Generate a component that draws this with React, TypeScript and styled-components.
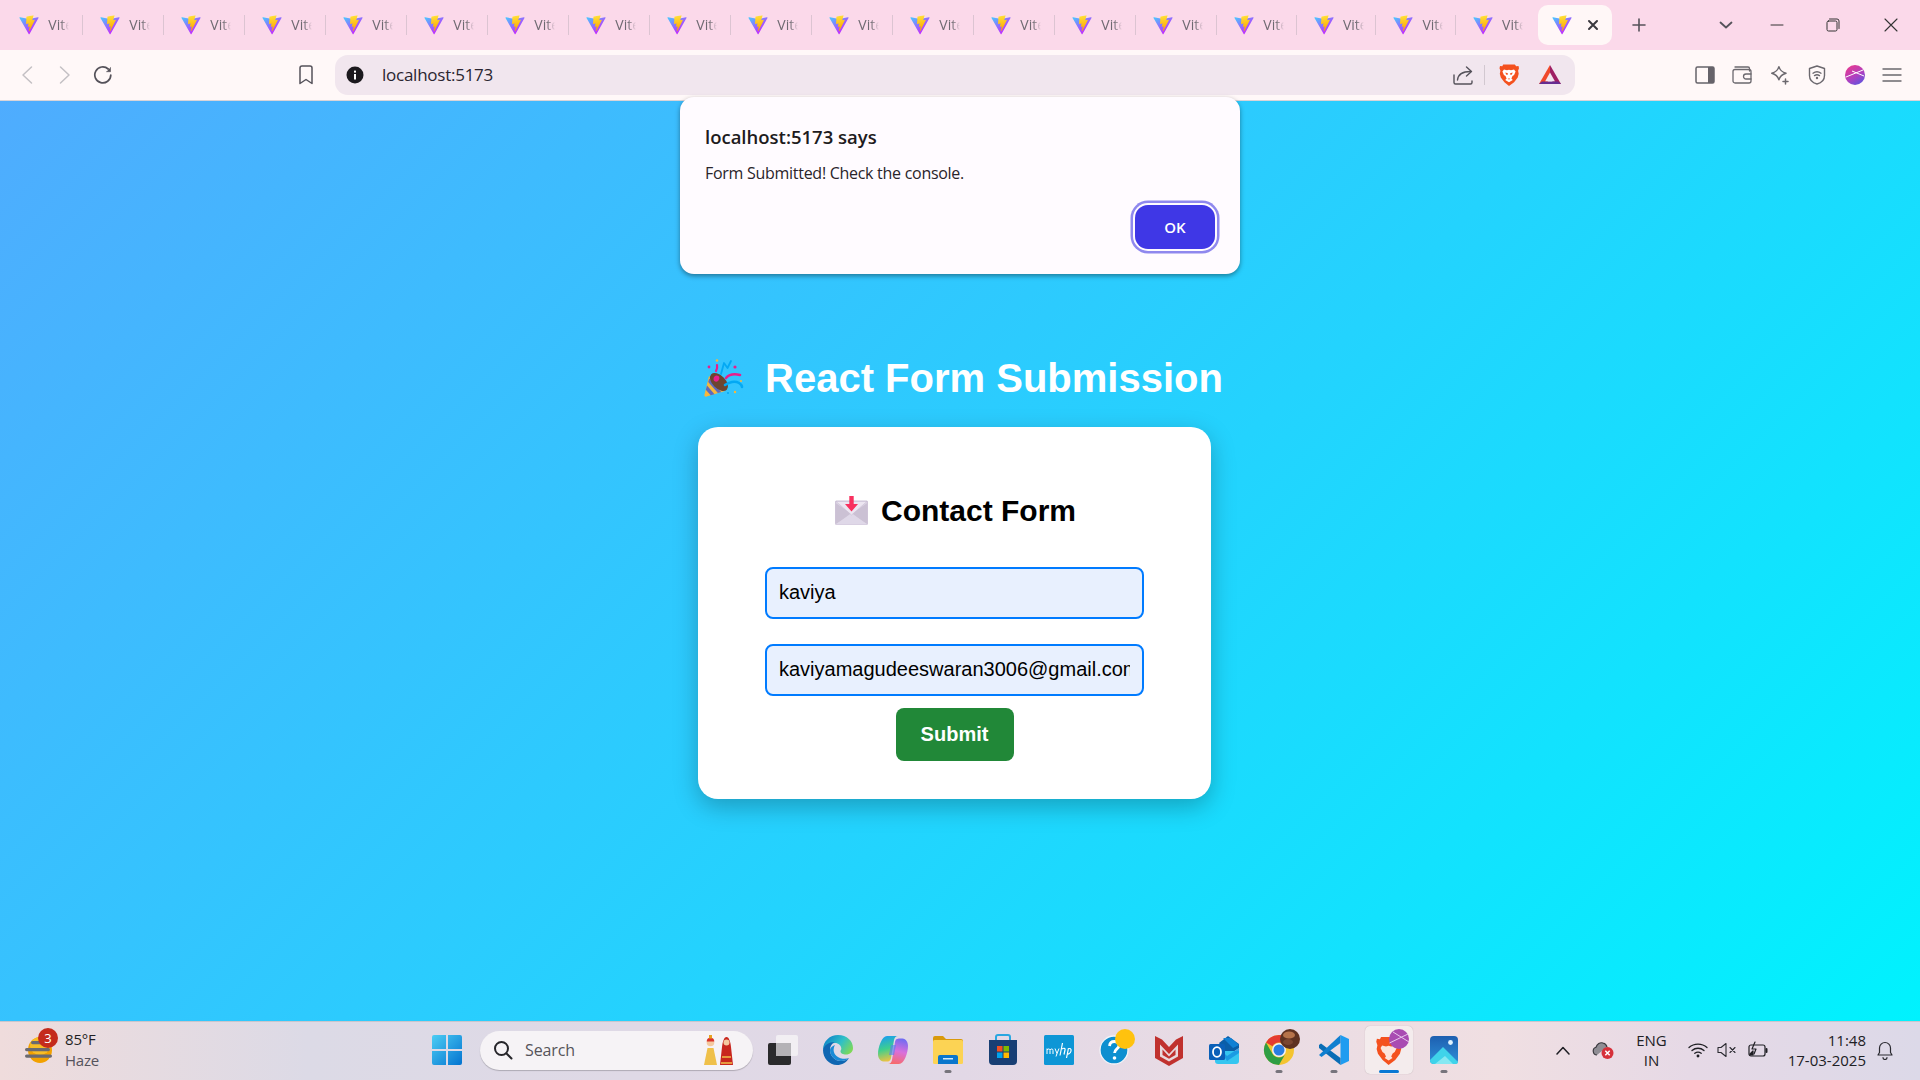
import React from 'react';
import styled, { createGlobalStyle } from 'styled-components';

const Global = createGlobalStyle`
  html, body { margin: 0; padding: 0; }
  body { font-family: "Liberation Sans", Arial, sans-serif; overflow: hidden; }
  * { box-sizing: border-box; }
`;

const UI = `"Open Sans", "Noto Sans", sans-serif`;

const Screen = styled.div`
  position: relative;
  width: 1920px;
  height: 1080px;
  display: flex;
  flex-direction: column;
  overflow: hidden;
`;

/* ---------- tab strip ---------- */
const TabStrip = styled.div`
  height: 50px;
  flex: none;
  display: flex;
  align-items: center;
  padding-left: 2.3px;
  background: #fbd9ea;
`;
const Tab = styled.div<{ $narrow?: boolean }>`
  width: ${p => (p.$narrow ? 79.6 : 81)}px;
  height: 20px;
  flex: none;
  display: flex;
  align-items: center;
  padding-left: 17px;
`;
const TabTitle = styled.span`
  width: 21px;
  margin-left: 9px;
  font: 400 14px/20px ${UI};
  color: #6f6a72;
  overflow: hidden;
  white-space: nowrap;
  mask-image: linear-gradient(to right, #000 60%, transparent 100%);
`;
const TabSep = styled.span<{ $hidden?: boolean }>`
  width: 1px;
  height: 20px;
  margin-left: auto;
  background: ${p => (p.$hidden ? 'transparent' : '#dcc4d2')};
`;
const ActiveTab = styled.div`
  width: 74px;
  height: 40px;
  margin-left: 2.4px;
  flex: none;
  border-radius: 10px;
  background: #fff7f7;
  display: flex;
  align-items: center;
  padding-left: 14px;
  gap: 15px;
`;
const PlusCell = styled.div`
  width: 30px;
  margin-left: 12px;
  display: flex;
  justify-content: center;
`;
const WindowControls = styled.div`
  margin-left: auto;
  display: flex;
  align-items: center;
`;
const ControlCell = styled.div<{ $w: number }>`
  width: ${p => p.$w}px;
  display: flex;
  justify-content: center;
`;
const CloseCell = styled(ControlCell)`
  margin-left: 4px;
`;

/* ---------- toolbar ---------- */
const Toolbar = styled.div`
  height: 51px;
  flex: none;
  display: flex;
  align-items: flex-start;
  padding: 5px 0 0 8px;
  background: #fff8f8;
  border-bottom: 1px solid #d9d4d8;
`;
const ToolCell = styled.div<{ $w?: number }>`
  width: ${p => p.$w ?? 38}px;
  height: 40px;
  flex: none;
  display: flex;
  align-items: center;
  justify-content: center;
`;
const BookmarkCell = styled(ToolCell)`
  margin-left: 165px;
`;
const AddressBar = styled.div`
  width: 1240px;
  height: 40px;
  margin-left: 10px;
  flex: none;
  display: flex;
  align-items: center;
  padding: 0 13px 0 10px;
  border-radius: 13px;
  background: #f1e6ee;
`;
const UrlText = styled.span`
  margin-left: 17px;
  font: 400 17px/24px ${UI};
  color: #2a2530;
  letter-spacing: -0.25px;
`;
const ShareCell = styled.div`
  margin-left: auto;
  display: flex;
`;
const BarSep = styled.span`
  width: 1px;
  height: 20px;
  margin: 0 12px 0 11px;
  background: #d2c8d0;
`;
const BraveCell = styled.div`
  display: flex;
  margin-right: 17px;
`;
const RightTools = styled.div`
  margin-left: 111px;
  display: flex;
`;

/* ---------- page ---------- */
const Page = styled.main`
  flex: 1;
  min-height: 0;
  display: flex;
  flex-direction: column;
  align-items: center;
  padding-top: 254px;
  background: linear-gradient(135deg, #4facfe 0%, #00f2fe 100%);
`;
const PageTitle = styled.h1`
  margin: 0 0 26px 7px;
  display: flex;
  align-items: center;
  font: 700 40px/46px "Liberation Sans", Arial, sans-serif;
  color: #fff;
  white-space: nowrap;
`;
const TitleEmoji = styled.span`
  display: flex;
  margin-right: 20px;
`;
const Card = styled.section`
  width: 513px;
  height: 372px;
  margin-left: -11px;
  padding: 65px 67px 0;
  display: flex;
  flex-direction: column;
  align-items: center;
  border-radius: 20px;
  background: #fff;
  box-shadow: 0 8px 24px rgba(0, 0, 0, 0.25);
`;
const CardTitle = styled.h2`
  margin: 0 0 38px 2px;
  display: flex;
  align-items: center;
  font: 700 30px/37px "Liberation Sans", Arial, sans-serif;
  color: #000;
  white-space: nowrap;
`;
const CardEmoji = styled.span`
  display: flex;
  margin-right: 13px;
  margin-top: -1px;
`;
const Form = styled.form`
  width: 100%;
  display: flex;
  flex-direction: column;
  align-items: center;
`;
const Field = styled.input`
  width: 100%;
  height: 52px;
  padding: 0 12px 2px;
  margin-bottom: 25px;
  border: 2px solid #007bff;
  border-radius: 8px;
  outline: none;
  background: #e8f0fe;
  color: #000;
  font: 400 20px "Liberation Sans", Arial, sans-serif;
  &:last-of-type { margin-bottom: 12px; }
`;
const SubmitButton = styled.button`
  width: 118px;
  height: 53px;
  border: 0;
  border-radius: 8px;
  background: #218838;
  color: #fff;
  font: 700 20px "Liberation Sans", Arial, sans-serif;
`;

/* ---------- alert ---------- */
const AlertBox = styled.div`
  position: absolute;
  left: 680px;
  top: 97px;
  width: 560px;
  height: 177px;
  padding: 27px 25px 0;
  border-radius: 14px;
  background: #fffbff;
  box-shadow: 0 2px 5px rgba(0, 0, 0, 0.4);
`;
const AlertTitle = styled.div`
  font: 600 18.5px/26px ${UI};
  color: #201a20;
`;
const AlertBody = styled.div`
  margin-top: 12px;
  font: 400 16px/22px ${UI};
  color: #2a242a;
  letter-spacing: -0.28px;
`;
const AlertOk = styled.button`
  position: absolute;
  left: 455px;
  top: 108px;
  width: 80px;
  height: 44px;
  border: 0;
  border-radius: 13px;
  background: #3f37e6;
  color: #fff;
  font: 600 15px ${UI};
  box-shadow: 0 0 0 2px #fffbff, 0 0 0 4.5px #8f88ee;
`;

/* ---------- taskbar ---------- */
const Taskbar = styled.footer`
  height: 59px;
  flex: none;
  display: flex;
  align-items: center;
  padding-bottom: 2px;
  border-top: 1px solid #c9c6cc;
  background: linear-gradient(90deg, #efdcdc 0%, #dcdae6 16%, #e2d8e6 50%, #f0dfe2 78%, #e6d9e6 88%, #dcd9e8 100%);
`;
const Weather = styled.div`
  position: relative;
  width: 419px;
  height: 100%;
  flex: none;
  display: flex;
  align-items: center;
  padding-left: 25px;
`;
const WeatherBadge = styled.span`
  position: absolute;
  left: 38px;
  top: 6px;
  width: 20px;
  height: 20px;
  border-radius: 50%;
  background: #c42b1c;
  color: #fff;
  font: 400 13px/20px ${UI};
  text-align: center;
`;
const WeatherText = styled.div`
  margin-left: 10px;
  display: flex;
  flex-direction: column;
  font: 400 15px/21px ${UI};
  letter-spacing: -0.2px;
`;
const WeatherTemp = styled.span`
  color: #1f1f24;
`;
const WeatherCond = styled.span`
  color: #55535c;
`;
const StartCell = styled.div`
  width: 56px;
  flex: none;
  display: flex;
  justify-content: center;
`;
const SearchBox = styled.div`
  width: 273px;
  height: 39px;
  margin-left: 5px;
  flex: none;
  display: flex;
  align-items: center;
  padding: 0 19px 0 13px;
  border-radius: 20px;
  background: #f6f3f6;
  box-shadow: 0 1px 1px rgba(0, 0, 0, 0.22);
`;
const SearchLabel = styled.span`
  margin-left: 12px;
  font: 400 16px ${UI};
  color: #56545a;
  letter-spacing: -0.1px;
`;
const SearchArt = styled.span`
  margin-left: auto;
  display: flex;
`;
const Apps = styled.div`
  margin-left: 2.5px;
  height: 100%;
  flex: none;
  display: flex;
`;
const AppCell = styled.div<{ $active?: boolean }>`
  position: relative;
  width: 55.1px;
  height: 100%;
  display: flex;
  align-items: center;
  justify-content: center;
  &::before {
    content: '';
    display: ${p => (p.$active ? 'block' : 'none')};
    position: absolute;
    left: 3.5px;
    right: 3.5px;
    top: 4px;
    bottom: 4px;
    border-radius: 5px;
    background: #f4eced;
    box-shadow: 0 0 1px rgba(0, 0, 0, 0.25);
  }
  & > svg { position: relative; overflow: visible; }
`;
const AppDot = styled.span<{ $active?: boolean }>`
  position: absolute;
  bottom: 5px;
  left: 50%;
  transform: translateX(-50%);
  width: ${p => (p.$active ? 20 : 7)}px;
  height: 3px;
  border-radius: 2px;
  background: ${p => (p.$active ? '#0a78d4' : '#77747c')};
`;
const Tray = styled.div`
  margin-left: auto;
  display: flex;
  align-items: center;
  padding-right: 16px;
`;
const TrayCell = styled.div<{ $w: number }>`
  width: ${p => p.$w}px;
  flex: none;
  display: flex;
  justify-content: center;
`;
const TrayLang = styled.div`
  width: 57px;
  margin-right: 4px;
  flex: none;
  text-align: center;
  font: 400 15px/20px ${UI};
  color: #202024;
`;
const Clock = styled.div`
  width: 92px;
  flex: none;
  text-align: right;
  font: 400 15px/20px ${UI};
  color: #202024;
`;

/* ---------- icons ---------- */
const ViteLogo = ({ size = 20 }: { size?: number }) => (
  <svg width={size} height={size} viewBox="0 0 410 404" fill="none">
    <defs>
      <linearGradient id="viteA" x1="6" y1="33" x2="235" y2="344" gradientUnits="userSpaceOnUse">
        <stop stopColor="#41D1FF" />
        <stop offset="1" stopColor="#BD34FE" />
      </linearGradient>
      <linearGradient id="viteB" x1="194.65" y1="8.82" x2="236.08" y2="292.99" gradientUnits="userSpaceOnUse">
        <stop stopColor="#FFEA83" />
        <stop offset=".08" stopColor="#FFDD35" />
        <stop offset="1" stopColor="#FFA800" />
      </linearGradient>
    </defs>
    <path d="M399.641 59.5246L215.643 388.545C211.844 395.338 202.084 395.378 198.228 388.618L10.5817 59.5563C6.38087 52.1896 12.6802 43.2665 21.0281 44.7586L205.223 77.6824C206.398 77.8924 207.601 77.8904 208.776 77.6763L389.119 44.8058C397.439 43.2894 403.768 52.1434 399.641 59.5246Z" fill="url(#viteA)" />
    <path d="M292.965 1.5744L156.801 28.2552C154.563 28.6937 152.906 30.5903 152.771 32.8664L144.395 174.33C144.198 177.662 147.258 180.248 150.51 179.498L188.42 170.749C191.967 169.931 195.172 173.055 194.443 176.622L183.18 231.775C182.422 235.487 185.907 238.661 189.532 237.56L212.947 230.446C216.577 229.344 220.065 232.527 219.297 236.242L201.398 322.875C200.278 328.294 207.486 331.249 210.492 326.603L212.5 323.5L323.454 102.072C325.312 98.3645 322.108 94.137 318.036 94.9228L279.014 102.454C275.347 103.161 272.227 99.746 273.262 96.1583L298.731 7.86689C299.767 4.27314 296.636 0.855181 292.965 1.5744Z" fill="url(#viteB)" />
  </svg>
);

type StrokeProps = { w?: number; h?: number; c?: string; sw?: number; children: React.ReactNode; vb?: string };
const Line = ({ w = 20, h = 20, c = '#55525a', sw = 1.5, vb, children }: StrokeProps) => (
  <svg width={w} height={h} viewBox={vb ?? `0 0 ${w} ${h}`} fill="none" stroke={c} strokeWidth={sw} strokeLinecap="round" strokeLinejoin="round">
    {children}
  </svg>
);

const BraveLion = ({ size = 24 }: { size?: number }) => (
  <svg width={size} height={size} viewBox="0 0 24 24">
    <path d="M6.2 1.5h11.6l1.4 1.7 2.3-.3.5 2.3-.9 2.6.6 3-1 3.6-3.6 4.9L12 23l-4.6-3.7-3.6-4.9-1-3.6.6-3-.9-2.6.5-2.300 2.300.3z" fill="#f4511e" />
    <path d="M7 6.500l3 .8 2-.6 2 .6 3-.8 1.600 2-1.500 3.400-1.600 1.200-1.100 2.400 1.400 1.400-3.800 2.400-3.800-2.400 1.400-1.400-1.100-2.400-1.600-1.200-1.500-3.400z" fill="#fff" />
    <path d="M8.300 9.600l2.600.6-.4 1.800-1.400-.5zM15.700 9.600l-2.600.6.4 1.800 1.400-.5zM10.800 15.400h2.400L12 16.800z" fill="#f4511e" />
  </svg>
);

const BatLogo = () => (
  <svg width="24" height="22" viewBox="0 0 24 22">
    <path d="M12 1L1 20h7.600L12 13z" fill="#f0482b" />
    <path d="M12 1l11 19h-7.300L12 13z" fill="#9e1f63" />
    <path d="M1 20l3-2.600h16l3 2.600z" fill="#662d91" />
    <path d="M12 8.400l4.900 8.900H7.200z" fill="#f1e6ee" />
  </svg>
);

const ProfileGlobe = ({ size = 20 }: { size?: number }) => (
  <svg width={size} height={size} viewBox="0 0 20 20">
    <defs>
      <linearGradient id="globeG" x1="0.2" y1="0" x2="0.8" y2="1">
        <stop offset="0" stopColor="#e8398f" />
        <stop offset="0.55" stopColor="#b040c0" />
        <stop offset="1" stopColor="#5a55e0" />
      </linearGradient>
    </defs>
    <circle cx="10" cy="10" r="10" fill="url(#globeG)" />
    <path d="M1 12L18 5M7 6l12 5" stroke="#fff" strokeWidth="1" fill="none" />
  </svg>
);

const PartyPopper = () => (
  <svg width="41" height="38" viewBox="0 0 41 38">
    <path d="M0.500 35.500L5 17l16 15-18.500 5.500a1.500 1.500 0 0 1-2-2z" fill="#f6b73c" />
    <path d="M3 26.500l7.500 8.700-3.800 1.100-4.900-5.600zM5.300 19.500l12 13.500-3.400 1L4.200 23z" fill="#5c6bc0" />
    <ellipse cx="15" cy="23" rx="6.500" ry="11" transform="rotate(-45 15 23)" fill="#6d4530" />
    <path d="M9.500 20c0-3 3-4.500 5-3 1.500 1.200 1 3.500-.5 5-1.600 1.500-4.500.5-4.500-2z" fill="#e91e8c" />
    <path d="M22 19c3-3.500 8-4.500 14-3" fill="none" stroke="#e91e8c" strokeWidth="2.600" strokeLinecap="round" />
    <path d="M21 26c4-3 10-4.500 14-2 2 1.200 3 3 3 4" fill="none" stroke="#03a9f4" strokeWidth="2.600" strokeLinecap="round" />
    <path d="M17 15l3-11 3.500 5L27 2" fill="none" stroke="#03a9f4" strokeWidth="1.800" strokeLinecap="round" strokeLinejoin="round" />
    <path d="M12 12c1-2 1.500-4 1-6" fill="none" stroke="#e91e8c" strokeWidth="2.200" strokeLinecap="round" />
    <circle cx="5" cy="8" r="1.400" fill="#e91e8c" />
    <circle cx="13" cy="1.500" r="1.300" fill="#f6b73c" />
    <circle cx="31" cy="8" r="1.600" fill="#e91e8c" />
    <circle cx="37" cy="22" r="1" fill="#f6b73c" />
    <circle cx="31" cy="33" r="1.200" fill="#f6b73c" />
    <circle cx="24" cy="34" r="1" fill="#03a9f4" />
  </svg>
);

const InboxEnvelope = () => (
  <svg width="33" height="29" viewBox="0 0 33 29">
    <rect x="0.400" y="5" width="32.200" height="23.600" rx="1" fill="#ddd5e5" stroke="#c4b8cf" strokeWidth=".8" />
    <path d="M0.800 7l15.700 11L0.800 28zM32.200 7L16.500 18l15.700 10z" fill="#cbc1d4" />
    <path d="M1 28.500l15.500-11.500L32 28.500z" fill="#dfd8e8" />
    <path d="M1 5.400h31L16.500 19z" fill="#ece6f1" stroke="#c4b8cf" strokeWidth=".5" />
    <path d="M14.300 0h4.400v8h4.300l-6.500 7.500L10 8h4.300z" fill="#f8315f" />
  </svg>
);

const WeatherIcon = () => (
  <svg width="30" height="26" viewBox="0 0 30 26">
    <ellipse cx="15" cy="13" rx="12" ry="13" fill="#f2a100" />
    <ellipse cx="15" cy="9" rx="10" ry="9" fill="#f8bd26" />
    <g fill="#6b6a70">
      <rect x="6" y="4" width="18" height="3.200" rx="1.600" />
      <rect x="0" y="11" width="25" height="3.200" rx="1.600" />
      <rect x="0" y="17.500" width="27" height="3.200" rx="1.600" />
    </g>
  </svg>
);

const WindowsLogo = () => (
  <svg width="30" height="30" viewBox="0 0 30 30">
    <defs>
      <linearGradient id="winG" x1="0" y1="0" x2="1" y2="1">
        <stop offset="0" stopColor="#4ccdf4" />
        <stop offset="1" stopColor="#0373d0" />
      </linearGradient>
    </defs>
    <path d="M0 2a2 2 0 0 1 2-2h12v14H0zM16 0h12a2 2 0 0 1 2 2v12H16zM0 16h14v14H2a2 2 0 0 1-2-2zM16 16h14v12a2 2 0 0 1-2 2H16z" fill="url(#winG)" />
  </svg>
);

const SearchDolls = () => (
  <svg width="32" height="32" viewBox="0 0 32 32">
    <path d="M2 31l3.500-17h6l3.500 17z" fill="#efc04a" />
    <circle cx="8.500" cy="8.500" r="3.800" fill="#f4c9a0" />
    <path d="M4.700 7.500a3.800 3.800 0 0 1 7.600 0z" fill="#d9332a" />
    <rect x="7" y="1" width="3" height="3.500" fill="#e8a020" />
    <path d="M18 31l2-18c.5-5 2-10 4.500-10s4 5 4.500 10l2 18z" fill="#c8261e" />
    <circle cx="24.500" cy="8.500" r="3" fill="#f4c9a0" />
    <path d="M19 29h11M20 23h9" stroke="#efc04a" strokeWidth="1.400" />
  </svg>
);

const TaskView = () => (
  <svg width="30" height="30" viewBox="0 0 30 30">
    <rect x="0" y="8" width="23" height="22" rx="2" fill="#2a2a2c" />
    <rect x="8" y="0" width="22" height="21" rx="2" fill="#f3f1f4" fillOpacity=".92" />
    <rect x="8" y="8" width="15" height="13" fill="#b4b2b6" />
  </svg>
);

const EdgeIcon = () => (
  <svg width="30" height="30" viewBox="0 0 30 30">
    <defs>
      <linearGradient id="edgeG" x1="0" y1="0.200" x2="1" y2="0.700">
        <stop offset="0" stopColor="#0c7fc8" />
        <stop offset=".55" stopColor="#2fc0c8" />
        <stop offset="1" stopColor="#7ed957" />
      </linearGradient>
    </defs>
    <path d="M15 0c9 0 15 6 15 13 0 4-3 6.500-7 6.500-3 0-5.500-1-5.500-3.200 0-1 .8-1.300.8-2.800C18.300 10.500 15.500 8 12 8 6 8 2 12 0 15 0 6 7 0 15 0z" fill="url(#edgeG)" />
    <path d="M0 15C1 10 6 7 11.500 7 8 9 7 12 7 15c0 6 5 11 11 11 3 0 6-1 8-3-2.500 4.500-7 7-12 7C6 30 0 23 0 15z" fill="#0f66b2" />
    <path d="M7 15c0 6 5 11 11 11 3 0 6-1 8-3-3 1.500-9 1-12.500-2C10 18 10 13.500 12 10 9 11 7 13 7 15z" fill="#1b8ad6" />
  </svg>
);

const CopilotIcon = () => (
  <svg width="30" height="30" viewBox="0 0 30 30">
    <defs>
      <linearGradient id="copA" x1="0.300" y1="0" x2="0.500" y2="1">
        <stop offset="0" stopColor="#1a9ef0" />
        <stop offset=".5" stopColor="#3ecf8e" />
        <stop offset="1" stopColor="#f5c23e" />
      </linearGradient>
      <linearGradient id="copB" x1="0.600" y1="0" x2="0.400" y2="1">
        <stop offset="0" stopColor="#6f6cf2" />
        <stop offset=".5" stopColor="#d96fdc" />
        <stop offset="1" stopColor="#f76b6b" />
      </linearGradient>
    </defs>
    <path d="M9 1h11c-2.500 0-3.500 2-4 4l-3 18c-.6 3-2 4-7.500 3.500C2 26 0 23 0 19 0 12 4 1 9 1z" fill="url(#copA)" />
    <path d="M21 29H10c2.500 0 3.500-2 4-4l3-18c.6-3 2-4 7.500-3.500C28 4 30 7 30 11c0 7-4 18-9 18z" fill="url(#copB)" />
    <path d="M13 10h5l-2 10h-5z" fill="#5a7ff0" opacity=".65" />
  </svg>
);

const ExplorerIcon = () => (
  <svg width="30" height="30" viewBox="0 0 30 30">
    <path d="M0 3a2 2 0 0 1 2-2h8l3 3h15a2 2 0 0 1 2 2v6H0z" fill="#d99a0c" />
    <rect x="0" y="5" width="30" height="24" rx="1.500" fill="#fcd354" />
    <path d="M5 29v-7a2 2 0 0 1 2-2h16a2 2 0 0 1 2 2v7z" fill="#0a76cc" />
    <rect x="10" y="23" width="10" height="1.500" fill="#cfe8fa" />
  </svg>
);

const StoreIcon = () => (
  <svg width="30" height="32" viewBox="0 0 30 32">
    <path d="M8 7V3a2 2 0 0 1 2-2h10a2 2 0 0 1 2 2v4" fill="none" stroke="#29a7e1" strokeWidth="2" />
    <path d="M1 6h28v21a4 4 0 0 1-4 4H5a4 4 0 0 1-4-4z" fill="#183f74" />
    <rect x="9" y="12" width="5.500" height="5.500" fill="#f25022" />
    <rect x="15.500" y="12" width="5.500" height="5.500" fill="#7fba00" />
    <rect x="9" y="18.500" width="5.500" height="5.500" fill="#00a4ef" />
    <rect x="15.500" y="18.500" width="5.500" height="5.500" fill="#ffb900" />
  </svg>
);

const MyHpIcon = () => (
  <svg width="30" height="30" viewBox="0 0 30 30">
    <rect width="30" height="30" rx="1.500" fill="#0d96d6" />
    <path d="M3 19v-5.500m0 1.500c1-1.500 3-1.500 3 .5V19m0-4c1-1.500 3-1.500 3 .5V19M11 13.500l2 5 2-5M13 18.500l-1 3" stroke="#fff" strokeWidth="1" fill="none" />
    <path d="M18.500 8l-2.500 12.500M18 14c1.500-1.200 3.500-1 3 1l-1 4.500M24.500 13.200L22.500 23M24 14c2-1.200 3.500 0 3 2-.5 2.500-2.500 3.500-4.200 2.800" stroke="#fff" strokeWidth="1.200" fill="none" />
  </svg>
);

const HelpIcon = () => (
  <svg width="30" height="30" viewBox="0 0 30 30">
    <circle cx="15" cy="15" r="14" fill="#0d8fd0" stroke="#f4f4f8" strokeWidth="1.300" />
    <path d="M10.500 11c.3-3 2.300-4.500 4.800-4.500s4.700 1.600 4.700 4c0 3.500-4.400 3.400-4.400 7.500" fill="none" stroke="#fff" strokeWidth="2.800" />
    <circle cx="15.500" cy="23" r="1.800" fill="#fff" />
    <circle cx="26" cy="4" r="10" fill="#ffc20e" />
  </svg>
);

const McAfeeIcon = () => (
  <svg width="28" height="31" viewBox="0 0 28 31">
    <path d="M0 1l7 3.500 7 7.500 7-7.500L28 1v22L14 31 0 23z" fill="#c0312e" />
    <path d="M5 9.500l9 9.500 9-9.500v12l-9 5-9-5z" fill="#e8d8dc" />
    <path d="M7.500 14.500l6.500 7 6.500-7v5.500l-6.500 3.700L7.500 20z" fill="#c0312e" />
  </svg>
);

const OutlookIcon = () => (
  <svg width="30" height="28" viewBox="0 0 30 28">
    <path d="M10 7l9-7 11 8v4L18 20z" fill="#0a5ea8" />
    <path d="M14 2h8l8 7-6 3z" fill="#1080d4" />
    <path d="M6 15h24v10a3 3 0 0 1-3 3H9a3 3 0 0 1-3-3z" fill="#35c6f0" />
    <path d="M10 12l8 8 12-8v5l-12 8z" fill="#1590e0" opacity=".8" />
    <rect x="0" y="8" width="16" height="16" rx="1.500" fill="#0a60b8" />
    <ellipse cx="8" cy="16" rx="4" ry="4.800" fill="none" stroke="#fff" strokeWidth="1.800" />
  </svg>
);

const ChromeIcon = () => (
  <svg width="30" height="30" viewBox="0 0 30 30">
    <circle cx="15" cy="15" r="15" fill="#f4c430" />
    <path d="M15 0a15 15 0 0 1 13 7.500H15a7.500 7.500 0 0 0-6.500 3.750L2 7.500A15 15 0 0 1 15 0z" fill="#e53b30" />
    <path d="M2 7.500A15 15 0 0 0 15 30l6.500-11.250a7.500 7.500 0 0 1-13 0z" fill="#2f9e44" />
    <circle cx="15" cy="15" r="7" fill="#f4f0f6" />
    <circle cx="15" cy="15" r="5.500" fill="#2a7de1" />
    <circle cx="26" cy="4" r="10" fill="#5e3221" />
    <ellipse cx="25" cy="0" rx="6" ry="3.600" fill="#b5734a" />
    <ellipse cx="24" cy="7" rx="5" ry="3" fill="#7a4630" />
  </svg>
);

const VSCodeIcon = () => (
  <svg width="30" height="30" viewBox="0 0 30 30">
    <path d="M21.500 0L30 4v22l-8.500 4z" fill="#1f9cf0" />
    <path d="M0 10l2-1.500 19.500 14.500V30L0 13z" fill="#0a6db5" />
    <path d="M21.500 0v8L2.500 22 0 20z" fill="#0f7fd0" />
  </svg>
);

const BraveTask = () => (
  <svg width="30" height="30" viewBox="0 0 30 30">
    <g transform="translate(-1 0) scale(1.300)">
      <path d="M6.200 1.500h11.600l1.400 1.700 2.300-.3.500 2.300-.9 2.600.6 3-1 3.600-3.600 4.900L12 23l-4.600-3.700-3.600-4.900-1-3.600.6-3-.9-2.600.5-2.300 2.300.3z" fill="#f4511e" />
      <path d="M7 8l3 .8 2-.6 2 .6 3-.8 1.200 2-1.500 3-1.600 1.200-1.100 2.400 1 1-3 2-3-2 1-1-1.100-2.400-1.600-1.200-1.500-3z" fill="#fbe4dc" />
    </g>
    <circle cx="25" cy="4" r="10" fill="#a94bb2" />
    <path d="M15.500 8L34 -1M19 -3l16 10" stroke="#e8c8ee" strokeWidth="1" fill="none" />
  </svg>
);

const PhotosIcon = () => (
  <svg width="28" height="28" viewBox="0 0 28 28">
    <defs>
      <linearGradient id="phG" x1="0" y1="0" x2="0" y2="1">
        <stop offset="0" stopColor="#1d5fb0" />
        <stop offset="1" stopColor="#2e8fd8" />
      </linearGradient>
    </defs>
    <rect width="28" height="28" rx="4" fill="url(#phG)" />
    <circle cx="20.500" cy="6.500" r="2.400" fill="#dff2ff" />
    <path d="M0 24l13-13 15 15a2 2 0 0 1-2 2H4a4 4 0 0 1-4-4z" fill="#3fd3ea" />
    <path d="M5 28l10-8 8 8z" fill="#86e8f2" />
  </svg>
);

const Shield = () => (
  <Line w={18} h={20} sw={1.400} c="#6b686e">
    <path d="M9 1l7.500 2.500v7c0 4.500-3.500 7.500-7.500 8.500-4-1-7.500-4-7.500-8.500v-7z" />
    <path d="M5 8.200c2.400-1.800 5.600-1.800 8 0M6.500 10.600c1.500-1 3.500-1 5 0" />
    <circle cx="9" cy="13" r=".5" fill="#6b686e" />
  </Line>
);

const tabs = Array.from({ length: 19 }, (_, i) => i);

const apps: { key: string; icon: React.ReactNode; dot?: boolean; active?: boolean }[] = [
  { key: 'task', icon: <TaskView /> },
  { key: 'edge', icon: <EdgeIcon /> },
  { key: 'copilot', icon: <CopilotIcon /> },
  { key: 'explorer', icon: <ExplorerIcon />, dot: true },
  { key: 'store', icon: <StoreIcon /> },
  { key: 'myhp', icon: <MyHpIcon /> },
  { key: 'help', icon: <HelpIcon /> },
  { key: 'mcafee', icon: <McAfeeIcon /> },
  { key: 'outlook', icon: <OutlookIcon /> },
  { key: 'chrome', icon: <ChromeIcon />, dot: true },
  { key: 'vscode', icon: <VSCodeIcon />, dot: true },
  { key: 'brave', icon: <BraveTask />, active: true },
  { key: 'photos', icon: <PhotosIcon />, dot: true },
];

export default function App() {
  return (
    <Screen>
      <Global />
      <TabStrip>
        {tabs.map(i => (
          <Tab key={i} $narrow={i >= 15}>
            <ViteLogo />
            <TabTitle>Vite + React</TabTitle>
            <TabSep $hidden={i === tabs.length - 1} />
          </Tab>
        ))}
        <ActiveTab>
          <ViteLogo />
          <Line w={12} h={12} c="#3a383e" sw={2}>
            <path d="M2 2l8 8M10 2l-8 8" />
          </Line>
        </ActiveTab>
        <PlusCell>
          <Line w={14} h={14} c="#55525a" sw={1.600}>
            <path d="M7 1v12M1 7h12" />
          </Line>
        </PlusCell>
        <WindowControls>
          <ControlCell $w={40}>
            <Line w={14} h={10} c="#55525a" sw={1.800}>
              <path d="M1.500 2.500L7 7.500l5.500-5" />
            </Line>
          </ControlCell>
          <ControlCell $w={62}>
            <Line w={14} h={14} c="#333" sw={1}>
              <path d="M1 7h12" />
            </Line>
          </ControlCell>
          <ControlCell $w={50}>
            <Line w={14} h={14} c="#333" sw={1}>
              <rect x="1" y="3" width="10" height="10" rx="1.500" />
              <path d="M3.500 1h7.500a2 2 0 0 1 2 2v7.500" />
            </Line>
          </ControlCell>
          <CloseCell $w={58}>
            <Line w={14} h={14} c="#333" sw={1.100}>
              <path d="M1 1l12 12M13 1L1 13" />
            </Line>
          </CloseCell>
        </WindowControls>
      </TabStrip>

      <Toolbar>
        <ToolCell>
          <Line w={12} h={20} c="#c4c0c4" sw={1.500}>
            <path d="M10.500 2L2 10l8.500 8" />
          </Line>
        </ToolCell>
        <ToolCell>
          <Line w={12} h={20} c="#c4c0c4" sw={1.500}>
            <path d="M1.500 2L10 10l-8.500 8" />
          </Line>
        </ToolCell>
        <ToolCell>
          <Line w={20} h={20} c="#55525a" sw={1.700}>
            <path d="M17.800 10a8 8 0 1 1-2.600-6" />
            <path d="M17.500 2.500v4.200h-4" fill="#55525a" strokeWidth="0.600" />
          </Line>
        </ToolCell>
        <BookmarkCell>
          <Line w={16} h={20} c="#55525a" sw={1.500}>
            <path d="M2 3a2 2 0 0 1 2-2h8a2 2 0 0 1 2 2v15.500l-6-4-6 4z" />
          </Line>
        </BookmarkCell>
        <AddressBar>
          <svg width="20" height="20" viewBox="0 0 20 20">
            <circle cx="10" cy="10" r="8.500" fill="#1c191e" />
            <rect x="9" y="9" width="2" height="5.500" fill="#fff" />
            <rect x="9" y="5.600" width="2" height="2" fill="#fff" />
          </svg>
          <UrlText>localhost:5173</UrlText>
          <ShareCell>
            <Line w={20} h={20} c="#55525a" sw={1.400}>
              <path d="M1 10v7.500A1.500 1.500 0 0 0 2.500 19h15A1.500 1.500 0 0 0 19 17.500V16" />
              <path d="M4.500 15c.5-5 4-8.500 13-8.500" />
              <path d="M13.500 2l5 4.500-5 4.500" />
            </Line>
          </ShareCell>
          <BarSep />
          <BraveCell>
            <BraveLion />
          </BraveCell>
          <BatLogo />
        </AddressBar>
        <RightTools>
          <ToolCell $w={37.500}>
            <svg width="20" height="18" viewBox="0 0 20 18">
              <rect x="1" y="1" width="18" height="16" rx="1.500" fill="#fff8f8" stroke="#66636a" strokeWidth="1.500" />
              <rect x="13" y="1" width="6" height="16" fill="#66636a" />
            </svg>
          </ToolCell>
          <ToolCell $w={37.500}>
            <Line w={20} h={18} c="#6b686e" sw={1.300}>
              <path d="M3 1h13a1.500 1.500 0 0 1 1.500 1.500V5" />
              <rect x="1" y="3.500" width="18" height="13.500" rx="2" />
              <path d="M19 8h-5a2 2 0 0 0 0 5h5" />
            </Line>
          </ToolCell>
          <ToolCell $w={37.500}>
            <Line w={20} h={20} c="#6b686e" sw={1.300}>
              <path d="M9 1.500c1 3.500 2.600 5 6.500 6-4 1-5.500 2.500-6.500 6-1-3.500-2.500-5-6.500-6 4-1 5.500-2.500 6.500-6z" transform="translate(-1 0) scale(1.100)" />
              <path d="M15.500 14v5M13 16.500h5" strokeWidth="1.500" />
            </Line>
          </ToolCell>
          <ToolCell $w={37.500}>
            <Shield />
          </ToolCell>
          <ToolCell $w={37.500}>
            <ProfileGlobe />
          </ToolCell>
          <ToolCell $w={37.500}>
            <Line w={20} h={16} c="#6b686e" sw={1.400}>
              <path d="M1 2h18M1 8h18M1 14h18" />
            </Line>
          </ToolCell>
        </RightTools>
      </Toolbar>

      <Page>
        <PageTitle>
          <TitleEmoji>
            <PartyPopper />
          </TitleEmoji>
          React Form Submission
        </PageTitle>
        <Card>
          <CardTitle>
            <CardEmoji>
              <InboxEnvelope />
            </CardEmoji>
            Contact Form
          </CardTitle>
          <Form onSubmit={e => e.preventDefault()}>
            <Field type="text" readOnly value="kaviya" />
            <Field type="email" readOnly value="kaviyamagudeeswaran3006@gmail.com" />
            <SubmitButton type="submit">Submit</SubmitButton>
          </Form>
        </Card>
      </Page>

      <AlertBox>
        <AlertTitle>localhost:5173 says</AlertTitle>
        <AlertBody>Form Submitted! Check the console.</AlertBody>
        <AlertOk>OK</AlertOk>
      </AlertBox>

      <Taskbar>
        <Weather>
          <WeatherIcon />
          <WeatherBadge>3</WeatherBadge>
          <WeatherText>
            <WeatherTemp>85°F</WeatherTemp>
            <WeatherCond>Haze</WeatherCond>
          </WeatherText>
        </Weather>
        <StartCell>
          <WindowsLogo />
        </StartCell>
        <SearchBox>
          <Line w={20} h={20} c="#26252a" sw={2}>
            <circle cx="8.500" cy="8.500" r="6.500" />
            <path d="M13.500 13.500l5 5" />
          </Line>
          <SearchLabel>Search</SearchLabel>
          <SearchArt>
            <SearchDolls />
          </SearchArt>
        </SearchBox>
        <Apps>
          {apps.map(a => (
            <AppCell key={a.key} $active={a.active}>
              {a.icon}
              {(a.dot || a.active) && <AppDot $active={a.active} />}
            </AppCell>
          ))}
        </Apps>
        <Tray>
          <TrayCell $w={40}>
            <Line w={14} h={9} c="#1f1f24" sw={1.500}>
              <path d="M1 8l6-6.500L13 8" />
            </Line>
          </TrayCell>
          <TrayCell $w={40}>
            <svg width="22" height="20" viewBox="0 0 22 20">
              <path d="M5 15a4 4 0 0 1-1-7.800C5 4 8 2 11 3c2 .5 3.500 2 4 4" fill="#8f8d94" stroke="#3a383e" strokeWidth="1.200" />
              <circle cx="15.500" cy="13" r="6" fill="#d6303a" />
              <path d="M13.300 10.800l4.400 4.400M17.700 10.800l-4.400 4.400" stroke="#fff" strokeWidth="1.500" />
            </svg>
          </TrayCell>
          <TrayLang>
            ENG
            <br />
            IN
          </TrayLang>
          <TrayCell $w={28}>
            <Line w={20} h={16} c="#1f1f24" sw={1.300}>
              <path d="M1 5.500c5-4.500 13-4.500 18 0M4 8.500c3.500-3 8.500-3 12 0M6.800 11.300c2-1.500 4.400-1.500 6.400 0" />
              <circle cx="10" cy="14" r=".8" fill="#1f1f24" />
            </Line>
          </TrayCell>
          <TrayCell $w={30}>
            <Line w={20} h={16} c="#2a2a30" sw={1.100}>
              <path d="M1 5.500h3L9 1.500v13L4 10.500H1z" />
              <path d="M13 5.500l5 5M18 5.500l-5 5" />
            </Line>
          </TrayCell>
          <TrayCell $w={32}>
            <Line w={20} h={18} c="#1f1f24" sw={1.200}>
              <rect x="1" y="4" width="16" height="11" rx="2" />
              <path d="M18.500 8v3" strokeWidth="2" />
              <path d="M7 1L4 8h4l-2 5" />
              <path d="M2 13l3-3v4H2z" fill="#1f1f24" />
            </Line>
          </TrayCell>
          <Clock>
            11:48
            <br />
            17-03-2025
          </Clock>
          <TrayCell $w={38}>
            <Line w={18} h={20} c="#2a2a30" sw={1.200}>
              <path d="M2 15l1.500-2.500V8a5.500 5.500 0 0 1 11 0v4.500L16 15z" />
              <path d="M7 17.500a2 2 0 0 0 4 0" />
            </Line>
          </TrayCell>
        </Tray>
      </Taskbar>
    </Screen>
  );
}
